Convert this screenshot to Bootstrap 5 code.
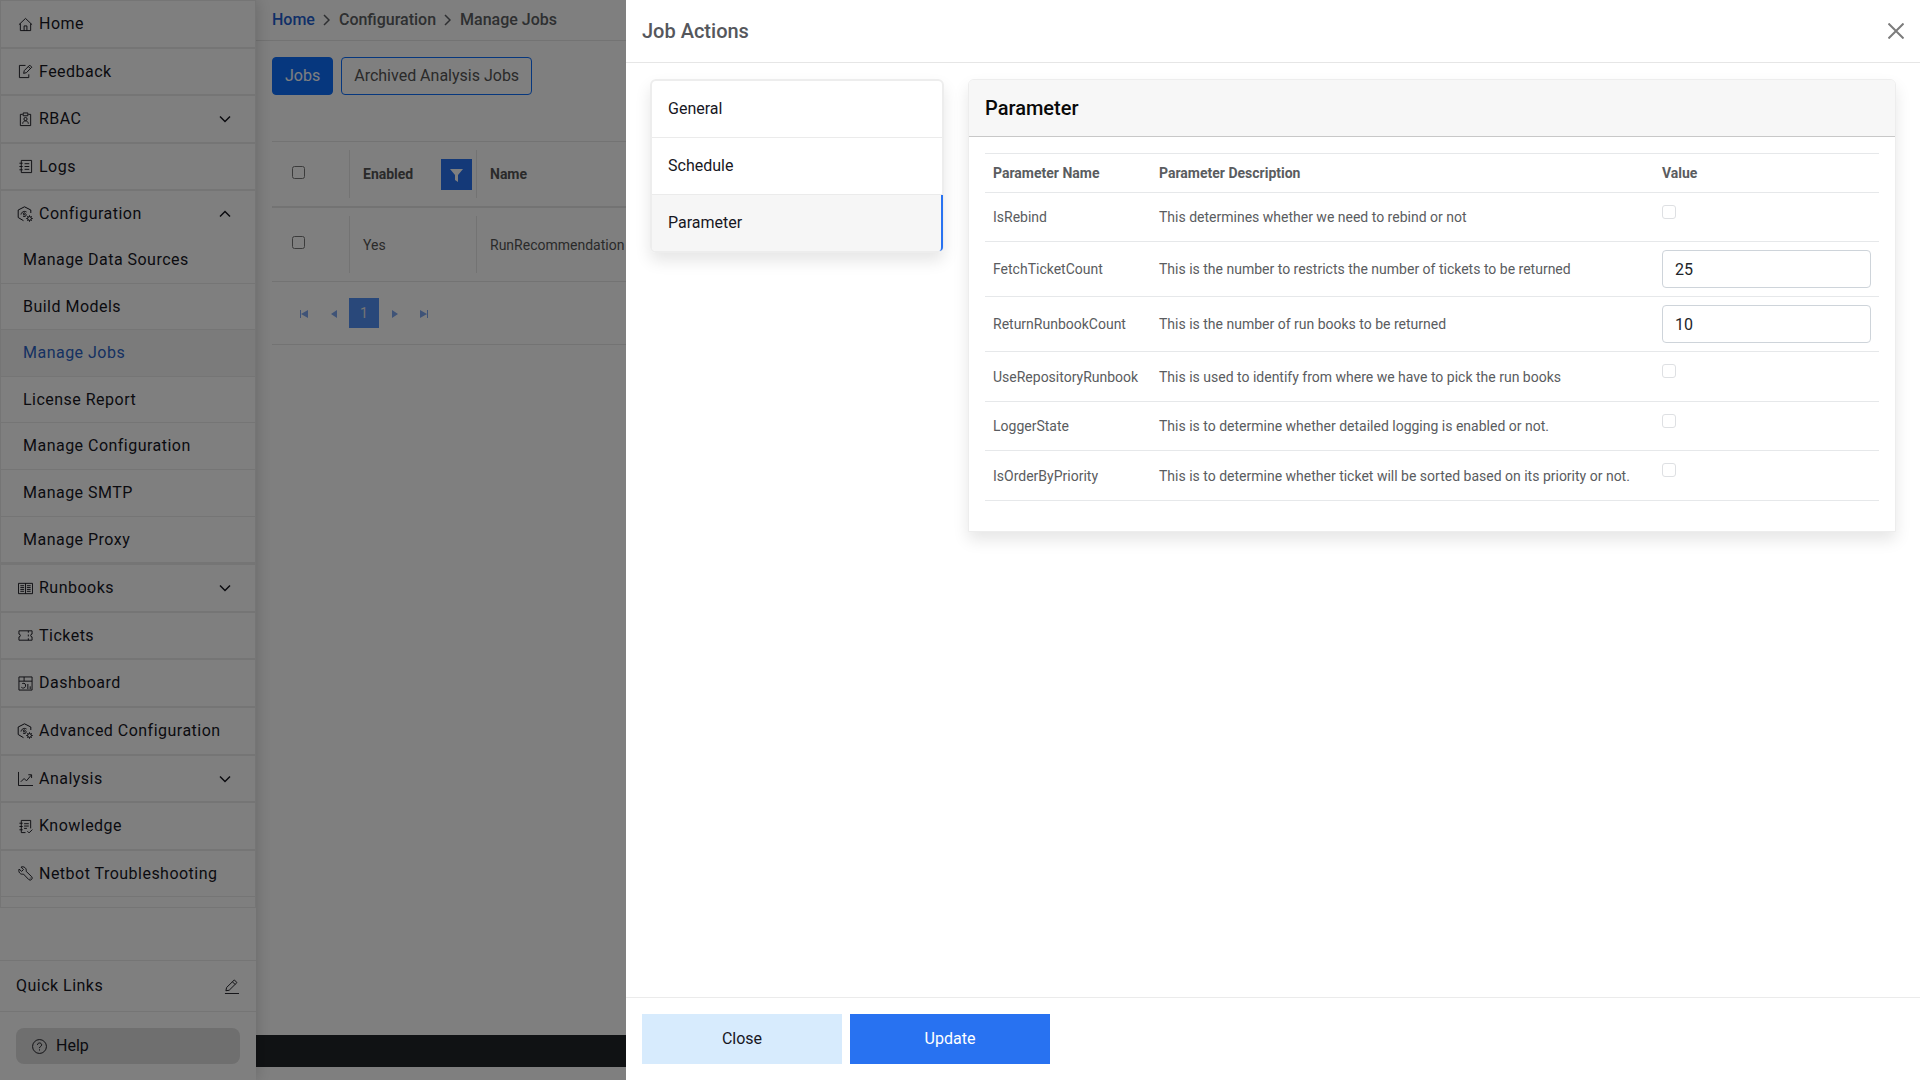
<!DOCTYPE html>
<html lang="en">
<head>
<meta charset="utf-8">
<meta name="viewport" content="width=device-width, initial-scale=1">
<title>Manage Jobs</title>
<link href="https://cdn.jsdelivr.net/npm/bootstrap@5.3.0/dist/css/bootstrap.min.css" rel="stylesheet">
<style>
  body { font-family: Roboto, "Liberation Sans", sans-serif; font-size: 16px; line-height: 24px; color: #555; background: #fff; }
  svg { fill: none; stroke: currentColor; flex: none; }
  svg.solid { fill: currentColor; stroke: none; }
  button { font-family: inherit; }

  /* Sidebar */
  .side-panel { width: 256px; flex: none; box-shadow: 0 0 16px rgba(0,0,0,.2); z-index: 1; background: #fff; }
  .side-menu { border: 1px solid #ebebeb; padding-bottom: 10px; letter-spacing: .03em; }
  .side-row { display: flex; align-items: center; gap: 6px; width: 100%; height: 48px; padding: 0 24px 0 17px; background: none; border: 0; border-bottom: 2px solid #ebebeb; color: #17171f; text-decoration: none; text-align: left; letter-spacing: inherit; white-space: nowrap; }
  .side-row.snug { height: 47px; }
  .side-row.opened { height: 46px; border-bottom: 0; }
  .side-row.final { height: 46px; border-bottom-width: 1px; }
  .side-row.gear { padding-left: 16px; }
  .side-row .chev { margin-left: auto; }
  .sub-row { display: flex; align-items: center; height: 47px; padding: 0 22px; border-bottom: 1px solid #ebebeb; color: #17171f; text-decoration: none; }
  .sub-row.snug { height: 46px; }
  .sub-row.current { background: #f6f6f6; color: #2a62c4; }
  .sub-row.final { height: 48px; border-bottom-width: 3px; }
  .quick-row { height: 52px; padding: 0 17px 0 16px; border: solid #ebebeb; border-width: 1px 0; color: #17171f; letter-spacing: .03em; }
  .help-btn { height: 36px; border: 0; border-radius: 8px; background: #dedede; color: #17171f; padding: 0 16px; gap: 9px; }

  /* Page behind the drawer */
  .crumb-bar { height: 41px; padding: 0 16px; border-bottom: 1px solid #e6e6e6; font-weight: 500; color: #5c5f63; }
  .crumb-bar a { color: #1f5fd0; text-decoration: none; }
  .crumb-bar svg { margin: 0 9px 0 8px; stroke-width: 1.5; }
  .tab-buttons { padding: 16px 0 46px; }
  .jobs-grid { border-top: 1px solid #e6e6e6; font-size: 14px; line-height: 20px; table-layout: fixed; width: 100%; margin: 0; }
  .jobs-grid th, .jobs-grid td { padding: 8px 0; }
  .jobs-grid thead tr { border-bottom: 2px solid #e6e6e6; }
  .jobs-grid tbody tr { border-bottom: 1px solid #e6e6e6; }
  .jobs-grid .c-pick { width: 77px; }
  .jobs-grid .c-on { width: 127px; }
  .grid-cell { display: flex; align-items: center; height: 48px; padding-left: 13px; border-left: 1px solid #e6e6e6; }
  .jobs-grid td .grid-cell { height: 57px; }
  .jobs-grid .pick { border-left: 0; padding-left: 20px; }
  .jobs-grid input { margin: 0 0 4px; }
  .filter-btn { width: 31px; height: 31px; border: 0; padding: 0; margin: 0 4px 0 auto; background: #2872f1; color: #fff; }
  .pager-bar { height: 63px; padding-left: 17px; border-bottom: 1px solid #e6e6e6; }
  .pager-bar button { width: 30px; height: 30px; border: 0; padding: 0; background: none; color: #7ea6ee; font-size: 14px; line-height: 20px; }
  .pager-bar .now { background: #5290f5; color: #e8e8e8; }
  .foot-band { height: 32px; background: #212529; margin-bottom: 13px; }

  /* Drawer */
  .job-drawer.offcanvas { width: calc(100vw - 626px); border: 0; }
  .job-drawer .offcanvas-header { height: 63px; border-bottom: 1px solid #e6e6e6; }
  .job-drawer .offcanvas-title { font-size: 20px; line-height: 24px; font-weight: 500; color: #55575c; }
  .drawer-close { border: 0; background: none; padding: 0; color: #7c7c7c; display: flex; }
  .job-drawer .offcanvas-body { padding: 16px 24px; display: flex; align-items: flex-start; gap: 24px; }
  .step-list { width: 294px; flex: none; border: 2px solid #ededed; border-radius: 6px; box-shadow: 0 8px 16px rgba(0,0,0,.1); }
  .step-list a { display: flex; align-items: center; height: 57px; padding: 0 16px; color: #17171f; text-decoration: none; border-bottom: 1px solid #ebebeb; }
  .step-list a:last-child { height: 56px; border-bottom: 0; background: #f6f6f6; border-right: 2px solid #2872f1; margin-right: -1px; border-radius: 0 0 4px 4px; }
  .param-card { min-width: 0; border-color: #ededed; border-radius: 6px 6px 0 0; box-shadow: 0 8px 16px rgba(0,0,0,.1); }
  .param-card .card-header { height: 57px; padding: 0 16px; background: #f7f7f7; border-bottom: 1px solid #c8c8c8; }
  .param-card h2 { font-size: 20px; line-height: 24px; font-weight: 500; color: #0a0a0a; margin: 0; }
  .param-table { font-size: 14px; line-height: 22px; margin: 0 0 14px; color: #5a5c60; border-top: 1px solid #e6e8ea; }
  .param-table > :not(caption) > * > * { padding: 8px; color: inherit; border-bottom: 1px solid #e6e8ea; vertical-align: middle; }
  .param-table th { font-weight: 700; }
  .param-table tbody tr { height: 50px; }
  .param-table tbody tr.snug { height: 49px; }
  .param-table .c-name { width: 166px; }
  .param-table .c-val { width: 225px; }
  .param-table td.tick { vertical-align: top; }
  .param-table .form-check-input { display: block; width: 14px; height: 14px; margin: 4px 0 0; border-color: #dee0e3; border-radius: 3px; }
  .param-table .form-control { height: 38px; font-size: 16px; line-height: 24px; border-color: #ced4da; border-radius: 4px; color: #212529; }
  .drawer-foot { padding: 16px; gap: 8px; border-top: 1px solid #ebebeb; }
  .drawer-foot button { width: 200px; height: 50px; border: 0; }
  .drawer-foot .shut { background: #d7ebfd; color: #17171f; }
  .drawer-foot .save { background: #2872f1; color: #fff; }
</style>
<script src="https://cdn.jsdelivr.net/npm/bootstrap@5.3.0/dist/js/bootstrap.bundle.min.js"></script>
</head>
<body>
<svg width="0" height="0" class="position-absolute" aria-hidden="true">
  <symbol id="i-home" viewBox="0 0 16 16"><path d="M1 8.2 8 1.5l7 6.7M2.5 7v7.5h11V7M6.5 14.500V9.500h3v5"/></symbol>
  <symbol id="i-edit" viewBox="0 0 16 16"><path d="M8 1.500H1.500v13h10V11M6 10l.7-3L12.500 1.200l2.200 2.200L9 9.200zM11 2.700l2.200 2.200"/></symbol>
  <symbol id="i-badge" viewBox="0 0 16 16"><path d="M5 2.500H2.500v12h11v-12H11M5.500 1h5v3h-5zM5 12.500c0-4 6-4 6 0"/><circle cx="8" cy="7.500" r="1.700"/></symbol>
  <symbol id="i-log" viewBox="0 0 16 16"><path d="M3.500 1.500h11v13h-11zM1.500 4.500H5M1.500 8H5M1.500 11.500H5M7 5h5M7 8h5M7 11h5"/></symbol>
  <symbol id="i-conf" viewBox="0 0 16 16"><path d="M13.800 7V4L7.500.8 1.200 4v7.500l5.300 3.200M4 8.500C4.500 6 7 4.500 9.500 6M9.500 8.500c-.5 2-2 2.500-3.500 1.500"/><circle cx="7.300" cy="7.800" r="1"/><circle cx="12.500" cy="12.500" r="1.900"/><path d="M12.500 9.300v1.300M12.500 14.400v1.300M9.300 12.500h1.300M14.400 12.500h1.300M10.300 10.300l.8.8M13.900 13.900l.8.8M14.700 10.300l-.8.8M11.100 13.900l-.8.8"/></symbol>
  <symbol id="i-book" viewBox="0 0 16 16"><path d="M.500 2.500h15v11H.500zM8 2.500v11M2.500 5h4M2.500 7h4M2.500 9h4M2.500 11h4M9.500 5h4M9.500 7h4M9.500 9h4M9.500 11h4"/></symbol>
  <symbol id="i-ticket" viewBox="0 0 16 16"><path d="M1 3h14v3.500a1.500 1.500 0 0 0 0 3V13H1V9.500a1.500 1.500 0 0 0 0-3zM11 3v2M11 7v2M11 11v2"/></symbol>
  <symbol id="i-dash" viewBox="0 0 16 16"><path d="M1 1h14v14H1zM1 5.500h14M6.500 1v4.500M10.500 14V8.500M13 14v-3M4.500 8c3-1 4 1 3.500 3s-3 2.500-4.500 1"/></symbol>
  <symbol id="i-chart" viewBox="0 0 16 16"><path d="M.500 1v14.500H16M3 11.500l3.500-3.500 2.500 2.500 5-6M11 4h3.500v3.500"/></symbol>
  <symbol id="i-know" viewBox="0 0 16 16"><path d="M8 14.500H3.500v-13h10V10M1.500 4.500H5M1.500 8H5M1.500 11.500H5M6.500 5h5M6.500 7.500h5M6.500 10h3M10 13l1.800 1.800 3.500-3.500"/></symbol>
  <symbol id="i-tool" viewBox="0 0 16 16"><path d="M1.200 3.200l2.600 2.600 2-2-2.600-2.600C6 0 9.500 2 8.700 5.700l5.900 5.700a2.200 2.200 0 0 1-3.100 3.100L5.800 8.600C2.500 9.500 0 6.500 1.200 3.200zM12.600 12.900h.8"/></symbol>
  <symbol id="i-pen" viewBox="0 0 16 16"><path d="M1 15.500h15M2 12.500l.8-3.500L11 1l2.800 2.800L5.500 12zM9 3l2.800 2.800"/></symbol>
  <symbol id="i-help" viewBox="0 0 16 16"><circle cx="8" cy="8" r="7.400"/><path d="M5.800 6.300c.2-3 4.500-2.600 4.500 0C10.300 8 8 7.800 8 9.700M8 11v1.300"/></symbol>
  <symbol id="i-down" viewBox="0 0 12 12"><path d="M1 3.500l5 5 5-5"/></symbol>
  <symbol id="i-up" viewBox="0 0 12 12"><path d="M1 8.500l5-5 5 5"/></symbol>
</svg>

<div class="d-flex min-vh-100">
  <aside class="side-panel d-flex flex-column">
    <nav class="side-menu" aria-label="Main menu">
      <a class="side-row" href="#"><svg width="15" height="15"><use href="#i-home"/></svg>Home</a>
      <a class="side-row snug" href="#"><svg width="15" height="15"><use href="#i-edit"/></svg>Feedback</a>
      <button class="side-row" type="button"><svg width="15" height="15"><use href="#i-badge"/></svg>RBAC<svg class="chev" width="12" height="12" stroke-width="1.500"><use href="#i-down"/></svg></button>
      <a class="side-row snug" href="#"><svg width="15" height="15"><use href="#i-log"/></svg>Logs</a>
      <button class="side-row opened gear" type="button" aria-expanded="true"><svg width="16" height="16"><use href="#i-conf"/></svg>Configuration<svg class="chev" width="12" height="12" stroke-width="1.500"><use href="#i-up"/></svg></button>
      <a class="sub-row" href="#">Manage Data Sources</a>
      <a class="sub-row snug" href="#">Build Models</a>
      <a class="sub-row current" href="#">Manage Jobs</a>
      <a class="sub-row snug" href="#">License Report</a>
      <a class="sub-row" href="#">Manage Configuration</a>
      <a class="sub-row" href="#">Manage SMTP</a>
      <a class="sub-row final" href="#">Manage Proxy</a>
      <button class="side-row" type="button"><svg width="15" height="15"><use href="#i-book"/></svg>Runbooks<svg class="chev" width="12" height="12" stroke-width="1.500"><use href="#i-down"/></svg></button>
      <a class="side-row snug" href="#"><svg width="15" height="15"><use href="#i-ticket"/></svg>Tickets</a>
      <a class="side-row" href="#"><svg width="15" height="15"><use href="#i-dash"/></svg>Dashboard</a>
      <a class="side-row gear" href="#"><svg width="16" height="16"><use href="#i-conf"/></svg>Advanced Configuration</a>
      <button class="side-row snug" type="button"><svg width="15" height="15"><use href="#i-chart"/></svg>Analysis<svg class="chev" width="12" height="12" stroke-width="1.500"><use href="#i-down"/></svg></button>
      <a class="side-row" href="#"><svg width="15" height="15"><use href="#i-know"/></svg>Knowledge</a>
      <a class="side-row final" href="#"><svg width="15" height="15"><use href="#i-tool"/></svg>Netbot Troubleshooting</a>
    </nav>
    <div class="mt-auto">
      <div class="quick-row d-flex align-items-center justify-content-between">Quick Links<svg width="15" height="15"><use href="#i-pen"/></svg></div>
      <div class="p-3"><button class="help-btn d-flex align-items-center w-100" type="button"><svg width="15" height="15"><use href="#i-help"/></svg>Help</button></div>
    </div>
  </aside>

  <main class="flex-grow-1 d-flex flex-column overflow-hidden">
    <nav class="crumb-bar d-flex align-items-center" aria-label="Breadcrumb">
      <a href="#">Home</a>
      <svg width="7" height="12" viewBox="0 0 7 12"><path d="M1 1l5 5-5 5"/></svg>
      <span>Configuration</span>
      <svg width="7" height="12" viewBox="0 0 7 12"><path d="M1 1l5 5-5 5"/></svg>
      <span>Manage Jobs</span>
    </nav>
    <div class="px-3">
      <div class="tab-buttons d-flex gap-2">
        <button class="btn btn-primary rounded-1" type="button">Jobs</button>
        <button class="btn btn-outline-primary rounded-1 text-reset" type="button">Archived Analysis Jobs</button>
      </div>
      <table class="jobs-grid">
        <thead><tr>
          <th class="c-pick"><div class="grid-cell pick"><input type="checkbox" aria-label="Select all jobs"></div></th>
          <th class="c-on"><div class="grid-cell">Enabled<button class="filter-btn" type="button" aria-label="Filter"><svg class="solid" width="13" height="13" viewBox="0 0 13 13"><path d="M0 0h13L8 6v7L5 11V6z"/></svg></button></div></th>
          <th><div class="grid-cell">Name</div></th>
        </tr></thead>
        <tbody><tr>
          <td><div class="grid-cell pick"><input type="checkbox" aria-label="Select job"></div></td>
          <td><div class="grid-cell">Yes</div></td>
          <td><div class="grid-cell">RunRecommendation</div></td>
        </tr></tbody>
      </table>
      <div class="pager-bar d-flex align-items-center">
        <button type="button" aria-label="First page"><svg class="solid" width="8" height="8" viewBox="0 0 8 8"><path d="M0 0h1v8H0zM8 0v8L1 4z"/></svg></button>
        <button type="button" aria-label="Previous page"><svg class="solid" width="7" height="8" viewBox="0 0 7 8"><path d="M6 0v8L0 4z"/></svg></button>
        <button class="now" type="button">1</button>
        <button type="button" aria-label="Next page"><svg class="solid" width="7" height="8" viewBox="0 0 7 8"><path d="M1 0v8l6-4z"/></svg></button>
        <button type="button" aria-label="Last page"><svg class="solid" width="8" height="8" viewBox="0 0 8 8"><path d="M7 0h1v8H7zM0 0v8l7-4z"/></svg></button>
      </div>
    </div>
    <footer class="foot-band mt-auto"></footer>
  </main>
</div>

<!-- Bootstrap opens a drawer marked "show" on load and adds its backdrop -->
<section class="job-drawer offcanvas offcanvas-end show" role="dialog" aria-labelledby="drawerTitle" tabindex="-1">
  <div class="offcanvas-header">
    <h1 class="offcanvas-title" id="drawerTitle">Job Actions</h1>
    <button class="drawer-close" type="button" aria-label="Close" data-bs-dismiss="offcanvas"><svg width="16" height="16" viewBox="0 0 16 16" stroke-width="2"><path d="M0.500 0.500l15 15M15.500 0.500l-15 15"/></svg></button>
  </div>
  <div class="offcanvas-body">
    <nav class="step-list" aria-label="Job sections">
      <a href="#">General</a>
      <a href="#">Schedule</a>
      <a href="#">Parameter</a>
    </nav>
    <div class="param-card card flex-grow-1">
      <div class="card-header d-flex align-items-center"><h2>Parameter</h2></div>
      <div class="card-body">
        <table class="param-table table">
          <thead><tr><th class="c-name">Parameter Name</th><th>Parameter Description</th><th class="c-val">Value</th></tr></thead>
          <tbody>
            <tr class="snug"><td><label for="pRebind">IsRebind</label></td><td>This determines whether we need to rebind or not</td><td class="tick"><input class="form-check-input" type="checkbox" id="pRebind"></td></tr>
            <tr><td><label for="pFetch">FetchTicketCount</label></td><td>This is the number to restricts the number of tickets to be returned</td><td><input class="form-control" type="text" id="pFetch" value="25"></td></tr>
            <tr><td><label for="pReturn">ReturnRunbookCount</label></td><td>This is the number of run books to be returned</td><td><input class="form-control" type="text" id="pReturn" value="10"></td></tr>
            <tr><td><label for="pRepo">UseRepositoryRunbook</label></td><td>This is used to identify from where we have to pick the run books</td><td class="tick"><input class="form-check-input" type="checkbox" id="pRepo"></td></tr>
            <tr class="snug"><td><label for="pLogger">LoggerState</label></td><td>This is to determine whether detailed logging is enabled or not.</td><td class="tick"><input class="form-check-input" type="checkbox" id="pLogger"></td></tr>
            <tr><td><label for="pOrder">IsOrderByPriority</label></td><td>This is to determine whether ticket will be sorted based on its priority or not.</td><td class="tick"><input class="form-check-input" type="checkbox" id="pOrder"></td></tr>
          </tbody>
        </table>
      </div>
    </div>
  </div>
  <div class="drawer-foot d-flex">
    <button class="shut" type="button">Close</button>
    <button class="save" type="button" data-bs-dismiss="offcanvas">Update</button>
  </div>
</section>
</body>
</html>
